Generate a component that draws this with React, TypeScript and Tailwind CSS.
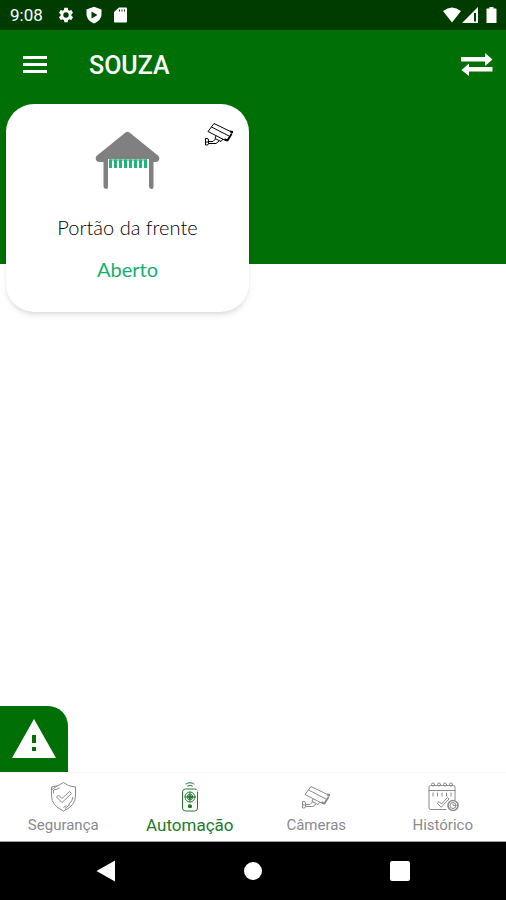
import type { ReactNode } from 'react'
import clsx from 'clsx'

function CameraIcon({ className }: { className?: string }) {
  return (
    <svg viewBox="0 0 32 24" className={clsx('w-8 h-6', className)} fill="none" stroke="currentColor" strokeWidth="1" strokeLinejoin="round">
      <path d="M11 1.500 29.500 10.500 23.500 19 5 9.500z" />
      <path d="M8.500 5 26 14" />
      <path d="M28.500 12 24.500 18.500l-3-1.500M30 10l-3-.5" strokeWidth="1.800" />
      <path d="M13 13.800 12 16.500l6 3 2-2.500M12.500 17 10 19.500H5.500M16 19l-3 2.500H5.500" />
      <path d="M2.500 16.500H4q1.500 0 1.500 1.500v3.500Q5.500 23 4 23H2.500zM2.500 20h3" />
    </svg>
  )
}

function ShieldIcon() {
  return (
    <svg viewBox="0 0 28 32" className="w-7 h-8" fill="none" stroke="currentColor" strokeWidth="1" strokeLinejoin="round">
      <path d="M14.500 1.500Q19 5.500 26.500 6v9q0 9.500-12 15Q2.500 24.500 2.500 15V6q7-.5 12-4.500z" />
      <path d="M4.500 12.500V9Q8 8.500 10.500 7M3 8.500 8 5M24 16q-.5 4.500-4.500 7.500M17.500 24.500l-3 2M16 27.500l5-4" />
      <path d="m7.500 16 2-2 3.500 3.500 7.500-7 2 2L13 21.500z" />
    </svg>
  )
}

function RemoteIcon() {
  return (
    <svg viewBox="0 0 20 32" className="w-5 h-8" fill="none" stroke="currentColor" strokeWidth="1" strokeLinecap="round">
      <path d="M6 3q4-2.800 8 0M7.500 5q2.500-1.800 5 0" />
      <path d="M17.500 11V27q0 3-3 3h-9q-3 0-3-3V11q0-3 3-3h9q2 0 2.500 1" />
      <circle cx="10" cy="16" r="5" />
      <circle cx="10" cy="16" r="2.800" />
      <circle cx="10" cy="16" r="1.500" fill="currentColor" />
      <path d="M10 11v2M5 16h2M13 16h2M10 19v2" />
      <rect x="8.500" y="24" width="3" height="2.500" rx=".5" fill="currentColor" />
    </svg>
  )
}

function HistoryIcon() {
  return (
    <svg viewBox="0 0 32 32" className="w-8 h-8" fill="none" stroke="currentColor" strokeWidth="1" strokeLinecap="round">
      <path d="M19 28.500H3.500q-1.500 0-1.500-1.500V6q0-1.500 1.500-1.500h23q1.500 0 1.500 1.500v13M2 9.500h26" />
      <circle cx="6" cy="3.500" r="1.500" />
      <circle cx="12" cy="3.500" r="1.500" />
      <circle cx="18" cy="3.500" r="1.500" />
      <circle cx="24" cy="3.500" r="1.500" />
      <path d="M6 12v3M10.500 12v3M15 12v3M19.500 12v3M24 12v3" />
      <path d="m10.500 22 1.500-1.500 2.500 2.500 6-6.500 1.500 1.500-7.500 8z" />
      <circle cx="26" cy="24.500" r="5" strokeWidth="1.600" />
      <circle cx="26" cy="24.500" r="3" />
      <path d="M26 23v1.500h1.500" />
    </svg>
  )
}

function GateIcon() {
  return (
    <svg viewBox="0 0 66 60" className="w-[66px] h-[60px]">
      <path d="M30.500 1.500q2-1.300 4 0L63.500 25q1.500 2 .5 4t-3 2h-2.500v24q0 3-1.500 3-3 0-3-3V28H13v27q0 3-1 3-3.500 0-3.500-3V31H4q-2 0-3-2t.5-4z" fill="#808080" />
      <path d="M15.500 28.500v8.500M20.500 28.500v8.500M25.500 28.500v8.500M30.500 28.500v8.500M35.500 28.500v8.500M40.500 28.500v8.500M45.500 28.500v8.500M50.500 28.500v8.500" stroke="#1fb574" strokeWidth="3" />
      <path d="M14 29h38" stroke="#1fb574" strokeWidth="1" />
    </svg>
  )
}

function StatusBar() {
  return (
    <div className="h-[30px] bg-[#003c00] pl-2.5 pr-2 flex items-center justify-between text-white">
      <div className="flex items-center gap-2.5">
        <span className="text-[17px] leading-5 mr-1">9:08</span>
        <svg viewBox="0 0 24 24" className="w-[18px] h-[18px]" fill="currentColor">
          <path d="M19.140 12.940c.04-.3.060-.61.060-.94s-.02-.64-.07-.94l2.030-1.580a.49.49 0 0 0 .12-.61l-1.920-3.320a.488.488 0 0 0-.59-.22l-2.390.96c-.5-.38-1.030-.7-1.620-.94l-.36-2.540a.484.484 0 0 0-.48-.41h-3.840c-.24 0-.43.17-.47.41l-.36 2.540c-.59.24-1.130.57-1.620.94l-2.390-.96c-.22-.08-.47 0-.59.22L2.740 8.870c-.12.21-.08.47.12.61l2.030 1.580c-.05.3-.09.63-.09.94s.02.64.07.94l-2.030 1.580a.49.49 0 0 0-.12.61l1.920 3.320c.12.22.37.29.59.22l2.390-.96c.5.38 1.030.7 1.620.94l.36 2.540c.05.24.24.41.48.41h3.840c.24 0 .44-.17.47-.41l.36-2.540c.59-.24 1.130-.56 1.620-.94l2.390.96c.22.08.47 0 .59-.22l1.920-3.320c.12-.22.070-.47-.12-.61zM12 15.600a3.600 3.600 0 1 1 0-7.200 3.600 3.600 0 0 1 0 7.200z" />
        </svg>
        <svg viewBox="0 0 18 18" className="w-[18px] h-[18px]" fill="currentColor" fillRule="evenodd">
          <path d="M9 .8 16.500 3.500v5Q16.500 14 9 17.500 1.500 14 1.500 8.500v-5zM6.500 5.500v7L12.500 9z" />
        </svg>
        <svg viewBox="0 0 18 18" className="w-[18px] h-[18px]" fill="currentColor" fillRule="evenodd">
          <path d="M6 1.500h7q1 0 1 1v13q0 1-1 1H2q-1 0-1-1V6zM6 3.500v2h1v-2zM8.500 3.500v2h1v-2zM11 3.500v2h1v-2z" />
        </svg>
      </div>
      <svg viewBox="0 0 56 18" className="w-14 h-[18px]" fill="currentColor" fillRule="evenodd">
        <path d="M1 5q9-7 18 0l-9 11.500z" />
        <path d="M36 1v16H20zM32 7v8.500h2V7z" />
        <path d="M47.500 1h4v1.500H54q.5 0 .5.500v13.500q0 .5-.5.500h-9q-.5 0-.5-.5V3q0-.5.500-.5h2.500z" />
      </svg>
    </div>
  )
}

function AppBar() {
  return (
    <header className="h-[70px] px-[13px] flex items-center bg-[#007006] text-white">
      <button type="button" aria-label="Menu" className="w-11 h-11 flex items-center justify-center">
        <svg viewBox="0 0 24 18" className="w-6 h-[18px]" fill="currentColor">
          <path d="M0 0h24v3H0zM0 7h24v3H0zM0 14h24v3H0z" />
        </svg>
      </button>
      <h1 className="ml-8 flex-1 pt-0.5 text-[25px] leading-8 font-medium">SOUZA</h1>
      <button type="button" aria-label="Trocar local" className="h-11 flex items-center">
        <svg viewBox="0 0 32 24" className="w-8 h-6" fill="currentColor">
          <path d="M0 4h24V0l7.500 6.500L24 13V8.500H0zM31.500 18.500H8V23L.5 17 8 10.500V14h23.500z" />
        </svg>
      </button>
    </header>
  )
}

function GateCard() {
  return (
    <article className="relative w-1/2 max-w-[243px] h-[208px] bg-white rounded-[28px] shadow-md flex flex-col items-center pt-[27px]">
      <button type="button" aria-label="Ver câmera" className="absolute top-[18px] right-[14px] text-black">
        <CameraIcon />
      </button>
      <GateIcon />
      <h2 className="mt-[22px] text-[20px] leading-7 font-light text-black">Portão da frente</h2>
      <p className="mt-3.5 text-[20px] leading-7 text-[#14b06c]">Aberto</p>
    </article>
  )
}

type Tab = { label: string; icon: ReactNode; active?: boolean }

const TABS: Tab[] = [
  { label: 'Segurança', icon: <ShieldIcon /> },
  { label: 'Automação', icon: <RemoteIcon />, active: true },
  { label: 'Câmeras', icon: <CameraIcon /> },
  { label: 'Histórico', icon: <HistoryIcon /> },
]

function TabBar() {
  return (
    <nav className="h-[70px] grid grid-cols-4 bg-white border-t border-t-[#fafafa] border-b border-b-[#a0a0a0]">
      {TABS.map((tab) => (
        <a
          key={tab.label}
          href="#"
          aria-current={tab.active ? 'page' : undefined}
          className={clsx('flex flex-col items-center pt-2', tab.active ? 'text-[#23792c] text-[17px]' : 'text-[#8a8a8a] text-[15px]')}
        >
          <span className="h-8 flex items-center">{tab.icon}</span>
          <span className="leading-6">{tab.label}</span>
        </a>
      ))}
    </nav>
  )
}

function SystemNav() {
  return (
    <div className="h-[58px] px-24 bg-black text-white flex items-center justify-between">
      <button type="button" aria-label="Voltar">
        <svg viewBox="0 0 20 22" className="w-5 h-[22px]" fill="currentColor">
          <path d="M19 .5v21L.5 11z" />
        </svg>
      </button>
      <button type="button" aria-label="Início" className="w-[18px] h-[18px] rounded-full bg-white" />
      <button type="button" aria-label="Recentes" className="w-5 h-5 rounded-xs bg-white" />
    </div>
  )
}

export default function App() {
  return (
    <div className="min-h-screen flex flex-col bg-white font-['Roboto',sans-serif]">
      <StatusBar />
      <AppBar />
      <main className="flex-1 flex flex-col font-['Lato',sans-serif]">
        <section className="h-[164px] bg-[#007006] pt-1 px-1.5">
          <GateCard />
        </section>
        <button
          type="button"
          aria-label="Pânico"
          className="mt-auto w-[68px] h-[66px] bg-[#007006] rounded-tr-[20px] text-white flex items-center justify-center"
        >
          <svg viewBox="0 0 44 40" className="w-11 h-10" fill="currentColor" fillRule="evenodd">
            <path d="M22 0 44 39H0zM20 16v8h4v-8zM20 28v4h4v-4z" />
          </svg>
        </button>
      </main>
      <TabBar />
      <SystemNav />
    </div>
  )
}
